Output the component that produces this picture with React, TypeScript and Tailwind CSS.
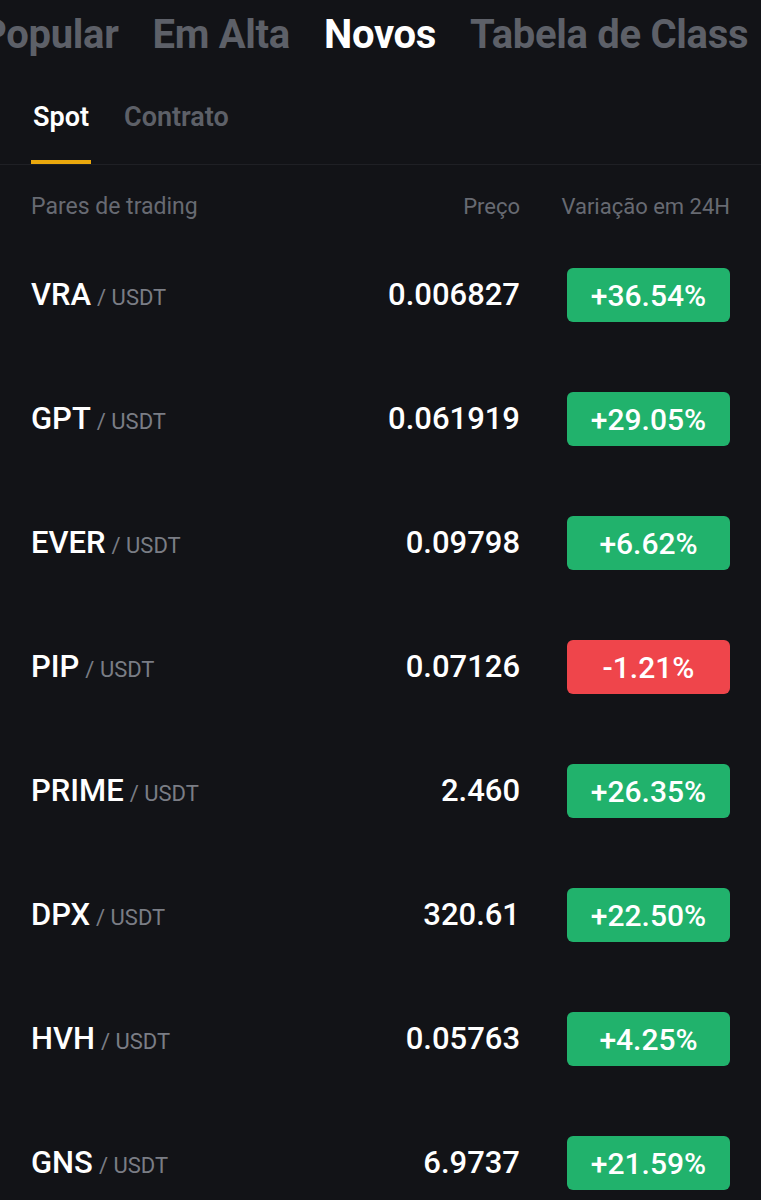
const rows = [
  { base: "VRA", price: "0.006827", change: "+36.54%" },
  { base: "GPT", price: "0.061919", change: "+29.05%" },
  { base: "EVER", price: "0.09798", change: "+6.62%" },
  { base: "PIP", price: "0.07126", change: "-1.21%" },
  { base: "PRIME", price: "2.460", change: "+26.35%" },
  { base: "DPX", price: "320.61", change: "+22.50%" },
  { base: "HVH", price: "0.05763", change: "+4.25%" },
  { base: "GNS", price: "6.9737", change: "+21.59%" },
];

export default function App() {
  return (
    <div
      className="w-[761px] h-[1200px] overflow-hidden bg-[#121317] text-white"
      style={{ fontFamily: "Roboto, 'Noto Sans', sans-serif" }}
    >
      {/* top category tabs */}
      <div className="h-[70px] flex items-center overflow-hidden whitespace-nowrap">
        <div className="flex gap-[34px] ml-[-19px] text-[40px] font-bold tracking-[-0.3px]">
          <span className="text-[#5d6068]">Popular</span>
          <span className="text-[#5d6068]">Em Alta</span>
          <span className="text-white">Novos</span>
          <span className="text-[#5d6068]">Tabela de Class</span>
        </div>
      </div>

      {/* spot / contrato */}
      <div className="h-[95px] border-b border-[#1f2025] flex items-end px-[31px] gap-[33px]">
        <div className="flex flex-col items-center">
          <span className="text-[27px] font-semibold leading-[30px] text-white">Spot</span>
          <div className="mt-[28px] h-[4px] w-[60px] bg-[#eaa80d]" />
        </div>
        <div className="flex flex-col">
          <span className="text-[27px] font-semibold leading-[30px] text-[#5d6068]">Contrato</span>
          <div className="mt-[28px] h-[4px]" />
        </div>
      </div>

      {/* column headers */}
      <div className="h-[68px] pt-[28px] px-[31px] flex text-[22px] leading-[28px] text-[#676a72]">
        <span className="flex-1 text-[23px]">Pares de trading</span>
        <span className="w-[160px] text-right">Preço</span>
        <span className="w-[210px] text-right">Variação em 24H</span>
      </div>

      {/* rows */}
      {rows.map((r) => {
        const up = !r.change.startsWith("-");
        return (
          <div key={r.base} className="h-[124px] px-[31px] flex items-center">
            <div className="flex-1 flex items-baseline">
              <span className="text-[31px] font-medium">{r.base}</span>
              <span className="ml-[6px] text-[22px] text-[#7a7d85]">/ USDT</span>
            </div>
            <span className="w-[200px] text-right text-[31px] font-medium">{r.price}</span>
            <div className="w-[210px] flex justify-end">
              <div
                className={
                  "w-[163px] h-[54px] rounded-[6px] flex items-center justify-center text-[30px] font-medium " +
                  (up ? "bg-[#21b26c]" : "bg-[#ef454b]")
                }
              >
                {r.change}
              </div>
            </div>
          </div>
        );
      })}
    </div>
  );
}
